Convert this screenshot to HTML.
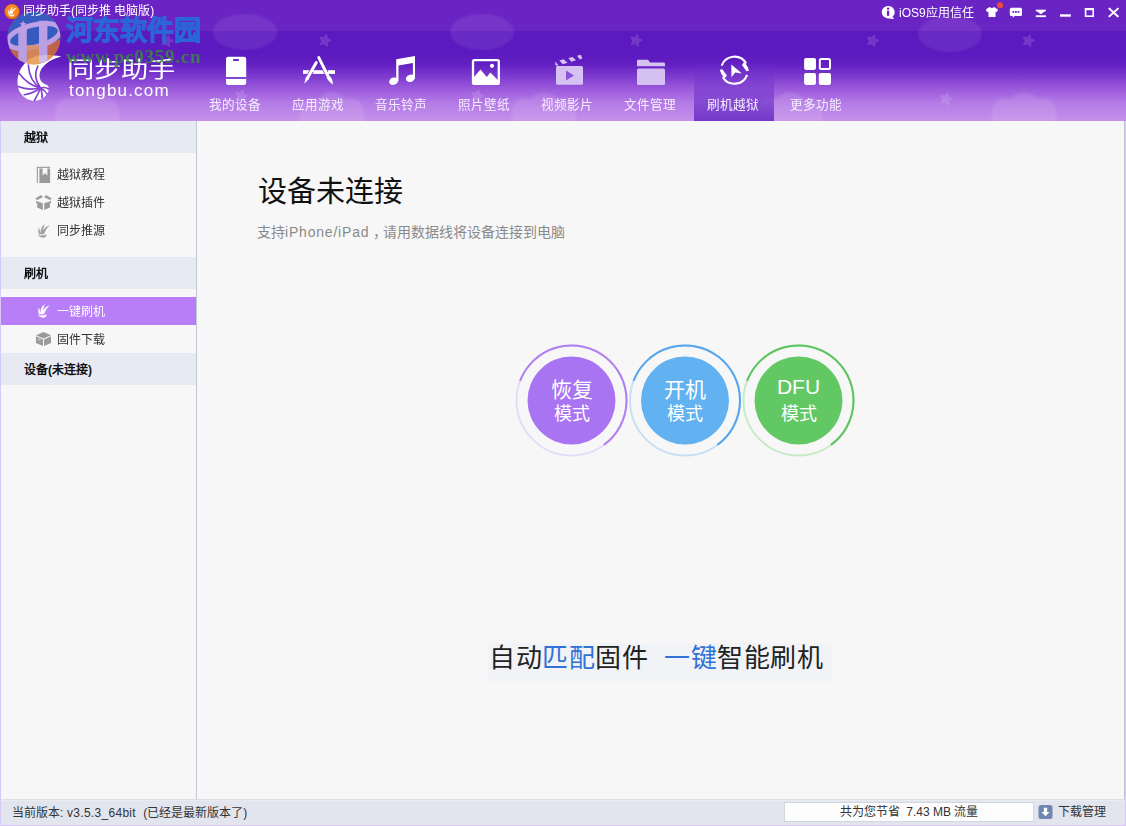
<!DOCTYPE html>
<html lang="zh-CN">
<head>
<meta charset="utf-8">
<style>
*{margin:0;padding:0;box-sizing:border-box}
html,body{width:1126px;height:826px;overflow:hidden;background:#f7f7f7}
body{position:relative;font-family:"Liberation Sans",sans-serif;}
.a{position:absolute}
#hdr{left:0;top:0;width:1126px;height:121px;
 background:linear-gradient(to bottom,#6b24c4 0px,#6b24c4 31px,#5b19bf 31px,#5b19bf 54px,#621fc2 64px,#7e3ccf 77px,#9e5cdc 90px,#b47ae6 103px,#c690ea 121px);overflow:hidden}
.ttl{left:23px;top:3px;font-size:12px;color:#fff;line-height:17px;white-space:nowrap}
.nav{top:0;width:80px;height:121px}
.nav .lb{position:absolute;left:0;width:80px;top:97px;text-align:center;font-size:12.6px;line-height:16px;color:#f4eeff;white-space:nowrap}
.sel{left:694px;top:55px;width:80px;height:66px;background:linear-gradient(to bottom,rgba(92,26,190,0.0),rgba(110,50,200,0.95))}
#side{left:0;top:121px;width:196px;height:678px;background:#f7f7f7}
#sline{left:196px;top:121px;width:1px;height:678px;background:#c2cad6}
.sh{left:0;width:196px;height:32px;background:#e7eaf3;font-size:12px;font-weight:bold;color:#111;line-height:34px;padding-left:24px;white-space:nowrap}
.si{left:0;width:196px;height:28px;font-size:12px;color:#333;line-height:31px;padding-left:57px;white-space:nowrap}
.si.on{background:#b77ef8;color:#fff}
.si svg{position:absolute;left:36px;top:6px}
#main{left:197px;top:121px;width:928px;height:678px;background:#f7f7f7}
#status{left:0;top:799px;width:1126px;height:27px;background:#e2e5ee;border-top:1px solid #dcdde6;box-shadow:inset 0 1px 0 #e9ebf2}
.bord{background:#d6c8f8}
</style>
</head>
<body>
<div id="hdr" class="a">
  <!-- decorations -->
  <svg class="a" style="left:0;top:0" width="1126" height="121" viewBox="0 0 1126 121">
    <defs>
      <g id="cl"><ellipse cx="32" cy="18" rx="32" ry="18"/></g>
      <g id="cb"><circle cx="14" cy="19" r="14"/><circle cx="32" cy="15" r="16"/><circle cx="50" cy="19" r="14"/><rect x="0" y="19" width="64" height="20"/></g>
      <filter id="bl" x="-20%" y="-20%" width="140%" height="140%"><feGaussianBlur stdDeviation="1.2"/></filter>
      <path id="st" d="M0.00 -6.30 L1.88 -2.59 L5.99 -1.95 L3.04 0.99 L3.70 5.10 L0.00 3.20 L-3.70 5.10 L-3.04 0.99 L-5.99 -1.95 L-1.88 -2.59 Z"/>
    </defs>
    <g fill="#fff" opacity="0.08" filter="url(#bl)">
      <use href="#cl" x="213" y="14"/>
      <use href="#cl" x="450" y="14"/>
      <use href="#cl" x="918" y="16"/>
    </g>
    <g fill="#fff" opacity="0.1" filter="url(#bl)">
      <use href="#cb" x="55" y="93"/>
      <use href="#cb" x="300" y="93"/>
      <use href="#cb" x="512" y="93"/>
      <use href="#cb" x="758" y="93"/>
      <use href="#cb" x="992" y="93"/>
    </g>
    <g fill="#fff" opacity="0.14" stroke="#fff" stroke-width="1" stroke-linejoin="round">
      <use href="#st" transform="translate(167 41) rotate(15)"/>
      <use href="#st" transform="translate(325 40.5) rotate(15)"/>
      <use href="#st" transform="translate(636 40.5) rotate(15)"/>
      <use href="#st" transform="translate(872.5 40.8) rotate(15)"/>
      <use href="#st" transform="translate(1028.4 40.8) rotate(15)"/>
      <use href="#st" transform="translate(241 96) rotate(15)"/>
      <use href="#st" transform="translate(477 96) rotate(15)"/>
      <use href="#st" transform="translate(946 99) rotate(15)"/>
    </g>
  </svg>
  <!-- tongbu logo -->
  <svg class="a" style="left:0;top:0" width="200" height="121" viewBox="0 0 200 121">
    <path d="M61.2 56.4 C55 55 45 54.5 39 55.5 C30 57 22 64 19 73 C16.5 80 17 88 20.5 93 C24 98.5 30 101 35 100.8 C41 100.5 46 97 48.3 91.5 C49.5 88 48.5 85.5 46 84.5 C42 83.5 39.5 80 39.5 75 C40 67 48 60 61.2 56.4 Z" fill="#fff"/>
    <g fill="none" stroke-width="1.6" stroke-linecap="round">
      <path d="M40.5 88 C36 82 34 74 37.8 66" stroke="#7c3acf"/>
      <path d="M40.5 88 C32 83 29 75 28.3 65" stroke="#7c3acf"/>
      <path d="M40.5 88 C31 86 24 80 18.8 73" stroke="#7e3dd0"/>
      <path d="M40.5 88 C32 90 24 89 18 86.6" stroke="#8240d2"/>
      <path d="M40.5 88 C35 92 29 94 24.2 94.7" stroke="#8442d3"/>
      <path d="M40.5 88 C39 92 37 96 34.4 100.5" stroke="#8442d3"/>
      <path d="M40.5 88 C42 92 42.5 95 42 98" stroke="#8442d3"/>
      <path d="M40.5 88 C44 90 46 92 47 94" stroke="#8442d3"/>
      <path d="M40.5 88 C44 87 46.5 87.5 48.5 89" stroke="#8442d3"/>
    </g>
  </svg>
  <div class="a" style="left:67px;top:52px;font-size:27.3px;line-height:36px;color:#fff;white-space:nowrap;transform:scaleY(0.8);transform-origin:0 50%;letter-spacing:0px">同步助手</div>
  <div class="a" style="left:69px;top:80px;font-size:17px;line-height:22px;color:#fff;white-space:nowrap;letter-spacing:1.2px">tongbu.com</div>
  <!-- watermark -->
  <svg class="a" style="left:0;top:0;opacity:0.88" width="70" height="70" viewBox="0 0 70 70">
    <defs><clipPath id="wc"><circle cx="34" cy="38" r="26.5"/></clipPath></defs>
    <g clip-path="url(#wc)">
      <rect x="0" y="0" width="70" height="70" fill="#d8782e" opacity="0.9"/>
      <path d="M0 0 H70 V36 Q40 48 0 46 Z" fill="#2a64c6" opacity="0.95"/>
      <ellipse cx="34" cy="36" rx="27" ry="11" transform="rotate(-14 34 36)" fill="none" stroke="#c9b2ea" stroke-width="5"/>
      <rect x="18.3" y="29" width="8.5" height="34" fill="#c9b2ea"/>
      <rect x="39" y="20.7" width="8.4" height="42" fill="#c9b2ea"/>
      <path d="M14 31 L26.8 26 L26.8 31 Z" fill="#c9b2ea"/>
      <rect x="26.8" y="45" width="12.2" height="20" fill="#e8a050" opacity="0.8"/>
    </g>
    <path d="M23 20.5 L24 23 L26.6 23.2 L24.6 24.8 L25.3 27.4 L23 26 L20.7 27.4 L21.4 24.8 L19.4 23.2 L22 23 Z" fill="#c9b2ea"/>
  </svg>
  <div class="a" style="left:66px;top:15px;font-family:'Liberation Sans',sans-serif;font-size:27px;font-weight:900;line-height:32px;color:#2a6ad8;white-space:nowrap;opacity:0.95;letter-spacing:0px;-webkit-text-stroke:1px #2a6ad8">河东软件园</div>
  <div class="a" style="left:66px;top:47px;font-family:'Liberation Serif',serif;font-size:19px;font-weight:bold;line-height:20px;color:#3a8a3c;white-space:nowrap;letter-spacing:0.75px;opacity:0.85">www.pc0359.cn</div>
  <!-- title -->
  <svg class="a" style="left:0;top:0" width="24" height="24" viewBox="0 0 24 24">
    <circle cx="12" cy="11.6" r="7.6" fill="#e8680c"/>
    <circle cx="12" cy="11.2" r="6.6" fill="#f88a22"/>
    <path d="M42 233.5 Q43.5 227 49.6 225.3 Q45.5 229 43.8 234.5 Z M40.8 233.5 Q39.8 227.5 44.8 224 Q42.8 229 42.6 233.8 Z M40.6 235.8 Q37 232 39 227.6 Q39.6 232 42.2 235 Z M38.3 232.5 Q38.6 237.7 43 237.7 Q46.6 237.5 46.6 234 Q44 236.2 40.8 234.6 Z" fill="#fff" transform="translate(12.3 11.6) scale(0.72) translate(-43.9 -230.8)"/>
  </svg>
  <div class="a ttl">同步助手(同步推 电脑版)</div>
  <!-- right title bar -->
  <svg class="a" style="left:870px;top:0" width="256" height="28" viewBox="870 0 256 28">
    <path d="M888 6 A6.2 6.2 0 1 1 888 18.4 L894.2 19 L892.6 16.8 A6.2 6.2 0 0 0 888 6 Z" fill="#fff"/>
    <circle cx="888" cy="12.2" r="6.2" fill="#fff"/>
    <rect x="887" y="10.6" width="2.2" height="5.2" fill="#6b24c4"/>
    <circle cx="888.1" cy="8.6" r="1.2" fill="#6b24c4"/>
    <!-- tshirt -->
    <path d="M989.5 7 L992 8.2 L994 7 L998 9.5 L996.8 12.3 L995.5 11.8 L995.5 17 L988.5 17 L988.5 11.8 L987.2 12.3 L985.8 9.5 Z" fill="#fff"/>
    <circle cx="1000" cy="5.2" r="3" fill="#f04a3c"/>
    <!-- chat -->
    <path d="M1011.3 7.8 H1020.5 Q1022 7.8 1022 9.3 V14.5 Q1022 16 1020.5 16 H1014.5 L1012.8 17.9 L1012.8 16 H1011.3 Q1009.8 16 1009.8 14.5 V9.3 Q1009.8 7.8 1011.3 7.8 Z" fill="#fff"/>
    <rect x="1012.4" y="11" width="1.8" height="1.8" fill="#6b24c4"/>
    <rect x="1015" y="11" width="1.8" height="1.8" fill="#6b24c4"/>
    <rect x="1017.6" y="11" width="1.8" height="1.8" fill="#6b24c4"/>
    <!-- download -->
    <rect x="1035.8" y="9.7" width="10.1" height="1.5" fill="#fff"/>
    <path d="M1036.5 11 L1045.2 11 L1040.85 14.3 Z" fill="#fff"/>
    <rect x="1035.8" y="15.3" width="10.1" height="1.8" fill="#fff"/>
    <!-- min -->
    <rect x="1060" y="14.3" width="10.8" height="2.4" fill="#fff"/>
    <!-- max -->
    <rect x="1085.6" y="8.8" width="7.6" height="7.4" fill="none" stroke="#fff" stroke-width="1.6"/>
    <rect x="1084.8" y="8" width="9.2" height="2.2" fill="#fff"/>
    <!-- close -->
    <path d="M1109.5 8.8 L1117.7 16.2 M1117.7 8.8 L1109.5 16.2" stroke="#fff" stroke-width="2" stroke-linecap="square"/>
  </svg>
  <div class="a" style="left:899px;top:4px;font-size:12px;line-height:18px;color:#fff;white-space:nowrap">iOS9应用信任</div>

  <!-- selected nav bg -->
  <div class="a sel"></div>
  <!-- nav icons -->
  <svg class="a" style="left:0;top:0" width="1126" height="121" viewBox="0 0 1126 121">
    <!-- phone -->
    <rect x="226" y="56.7" width="20.2" height="28.3" rx="2.2" fill="#fff"/>
    <rect x="232.9" y="59" width="6.3" height="2" rx="1" fill="#6a2cc6"/>
    <rect x="226" y="77.1" width="20.2" height="1.8" fill="#7233c9"/>
    <!-- app store A -->
    <rect x="303" y="70.2" width="32" height="3.7" fill="#fff"/>
    <g stroke="#7330c9" fill="none">
      <path d="M323 66 L326.3 72.7" stroke-width="4.4"/>
      <path d="M311.6 70.9 L308.5 76.3" stroke-width="4.5"/>
    </g>
    <g stroke="#fff" fill="none" stroke-linecap="round">
      <path d="M318.8 57.6 L328.2 76.5" stroke-width="2.9"/>
      <path d="M316.3 62.6 L307.4 78.2" stroke-width="3"/>
    </g>
    <path d="M326.6 77.8 L330 76.2 C331.5 78 332.8 80 332.9 84.6 C330.5 83 328.5 81 326.6 77.8 Z" fill="#fff"/>
    <path d="M305.8 77.3 L309 79.1 L304.3 83.8 Z" fill="#fff"/>
    <!-- music -->
    <g fill="#fff">
      <path d="M396.2 59.2 L415 56 L415 78.5 L412.9 78.5 L412.9 63 L398.5 65.5 L398.5 81 L396.2 81 Z"/>
      <ellipse cx="393.6" cy="81.2" rx="4.6" ry="3.6" transform="rotate(-20 393.6 81.2)"/>
      <ellipse cx="410.4" cy="78.3" rx="4.6" ry="3.6" transform="rotate(-20 410.4 78.3)"/>
    </g>
    <!-- picture -->
    <rect x="473" y="60.1" width="25.8" height="23.8" rx="1.5" fill="none" stroke="#fff" stroke-width="2.3"/>
    <circle cx="492" cy="65.8" r="2.1" fill="#fff"/>
    <path d="M474 83.5 L474 77 L480.5 69.6 L486.8 77 L490.3 72.5 L498 80.3 L498 83.5 Z" fill="#fff"/>
    <!-- clapper (light) -->
    <g fill="#d6c2f2">
      <rect x="556" y="66" width="27" height="18.7" rx="1.5"/>
      <path d="M555 61.5 L558.8 65.5 L555.6 65.5 Z"/>
      <path d="M559.3 60.4 L563.6 59.2 L567.6 62.7 L562.8 64.2 Z"/>
      <path d="M568.4 58 L572.6 57 L576 60.2 L571.3 61.7 Z"/>
      <path d="M577 55.7 L581 54.8 L582.3 58.6 L579.8 59.4 Z"/>
    </g>
    <path d="M566 70.4 L574 75.5 L566 80.6 Z" fill="#8a52d6"/>
    <!-- folder (light) -->
    <g fill="#d6c2f2">
      <path d="M637 61 Q637 59.8 638.2 59.8 L648 59.8 L650 62.6 L663.5 62.6 Q665 62.6 665 64 L665 66.3 L637 66.3 Z"/>
      <rect x="637" y="68.5" width="28" height="16.5" rx="1.5"/>
    </g>
    <!-- jailbreak circle -->
    <g fill="none" stroke="#fff" stroke-width="2.1">
      <path d="M721.7 65.6 A13.5 13.5 0 0 1 746.1 63.45"/>
      <path d="M747.1 74.8 A13.5 13.5 0 0 1 722.7 76.95"/>
    </g>
    <path d="M741.9 64.9 L743.9 62.3 A14.5 14.5 0 0 1 748.9 70.7 L746.5 71.2 Z" fill="#fff"/>
    <path d="M726.9 75.5 L724.9 78.1 A14.5 14.5 0 0 1 719.9 69.7 L722.3 69.2 Z" fill="#fff"/>
    <path d="M731.3 64.6 L741.9 73.4 L735.2 72.5 L731.5 77.3 Z" fill="#fff"/>
    <!-- grid -->
    <g fill="#fff">
      <rect x="804.1" y="58" width="11.9" height="11.9" rx="1.8"/>
      <rect x="819.8" y="59" width="10.2" height="10" rx="1.5" fill="none" stroke="#fff" stroke-width="2"/>
      <rect x="804.1" y="72.9" width="11.9" height="12" rx="1.8"/>
      <rect x="818.8" y="72.9" width="12.2" height="12" rx="1.8"/>
    </g>
  </svg>
  <div class="a nav" style="left:195px"><div class="lb">我的设备</div></div>
  <div class="a nav" style="left:278px"><div class="lb">应用游戏</div></div>
  <div class="a nav" style="left:361px"><div class="lb">音乐铃声</div></div>
  <div class="a nav" style="left:444px"><div class="lb">照片壁纸</div></div>
  <div class="a nav" style="left:527px"><div class="lb">视频影片</div></div>
  <div class="a nav" style="left:610px"><div class="lb">文件管理</div></div>
  <div class="a nav" style="left:693px"><div class="lb">刷机越狱</div></div>
  <div class="a nav" style="left:776px"><div class="lb">更多功能</div></div>
</div>

<div id="side" class="a">
  <div class="a sh" style="top:0">越狱</div>
  <svg class="a" style="left:0;top:0;z-index:2" width="60" height="240" viewBox="0 121 60 240">
    <!-- book -->
    <rect x="36.8" y="166.8" width="13.3" height="1.1" fill="#9a9a9a"/>
    <rect x="36.8" y="166.8" width="1.1" height="16.2" fill="#9a9a9a"/>
    <path d="M39.4 168.6 H50.1 V183 H39.4 Z M42.6 168.6 V175.5 L45 173.3 L47.4 175.5 V168.6 Z" fill="#9a9a9a" fill-rule="evenodd"/>
    <!-- open box -->
    <path d="M35.2 198.4 L41.2 195.1 L42.9 197.2 L37.2 200.1 Z M51.9 198.4 L45.9 195.1 L44.2 197.2 L49.9 200.1 Z" fill="#9a9a9a"/>
    <path d="M36.1 200.9 L42.8 203.3 L42.8 209.9 L37.2 207.6 L37.2 203.5 L36.1 203.1 Z M51 200.9 L44.3 203.3 L44.3 209.9 L49.9 207.6 L49.9 203.5 L51 203.1 Z" fill="#9a9a9a"/>
    <!-- swirl gray -->
    <path d="M42 233.5 Q43.5 227 49.6 225.3 Q45.5 229 43.8 234.5 Z M40.8 233.5 Q39.8 227.5 44.8 224 Q42.8 229 42.6 233.8 Z M40.6 235.8 Q37 232 39 227.6 Q39.6 232 42.2 235 Z M38.3 232.5 Q38.6 237.7 43 237.7 Q46.6 237.5 46.6 234 Q44 236.2 40.8 234.6 Z" fill="#a0a0a0"/>
    <!-- cube -->
    <path d="M36 335.3 L43.5 332 L51 335.3 L43.5 338.6 Z" fill="#9a9a9a"/>
    <path d="M36 336.3 L43 339.4 L43 346.1 L36 343 Z" fill="#9a9a9a"/>
    <path d="M51 336.3 L44 339.4 L44 346.1 L51 343 Z" fill="#9a9a9a"/>
    <path d="M38 339 L40.5 340.1" stroke="#f6f6f6" stroke-width="0.8"/>
  </svg>
  <div class="a si" style="top:39px">越狱教程</div>
  <div class="a si" style="top:67px">越狱插件</div>
  <div class="a si" style="top:95px">同步推源</div>
  <div class="a sh" style="top:136px">刷机</div>
  <div class="a si on" style="top:176px">一键刷机<svg width="16" height="18" viewBox="36 222 16 18" style="left:36px;top:5.1px"><path d="M42 233.5 Q43.5 227 49.6 225.3 Q45.5 229 43.8 234.5 Z M40.8 233.5 Q39.8 227.5 44.8 224 Q42.8 229 42.6 233.8 Z M40.6 235.8 Q37 232 39 227.6 Q39.6 232 42.2 235 Z M38.3 232.5 Q38.6 237.7 43 237.7 Q46.6 237.5 46.6 234 Q44 236.2 40.8 234.6 Z" fill="#fff"/></svg></div>
  <div class="a si" style="top:204px">固件下载</div>
  <div class="a sh" style="top:232px">设备(未连接)</div>
</div>
<div id="sline" class="a"></div>

<div id="main" class="a">
  <div class="a" style="left:61px;top:52px;font-size:29px;line-height:38px;color:#111;white-space:nowrap">设备未连接</div>
  <div class="a" style="left:60px;top:101px;font-size:14px;line-height:20px;color:#8a8a8a;white-space:nowrap">支持<span style="letter-spacing:0.8px">iPhone/iPad</span><span style="display:inline-block;width:14px;padding-left:4px;overflow:visible">，</span>请用数据线将设备连接到电脑</div>
  <svg class="a" style="left:300px;top:214px" width="360" height="130" viewBox="0 0 360 130">
    <g transform="translate(74.5,65.5)">
      <circle r="55" fill="none" stroke="#e6dcf8" stroke-width="2"/>
      <path d="M -51.35 -19.7 A 55 55 0 1 1 32.4 44.4" fill="none" stroke="#b27ff0" stroke-width="2"/>
      <circle r="44" fill="#a974f2"/>
      <text x="0" y="-4" text-anchor="middle" font-size="21" fill="#fff">恢复</text>
      <text x="0" y="19" text-anchor="middle" font-size="18" fill="#fff">模式</text>
    </g>
    <g transform="translate(188,65.5)">
      <circle r="55" fill="none" stroke="#c8e0f6" stroke-width="2"/>
      <path d="M -51.35 -19.7 A 55 55 0 1 1 32.4 44.4" fill="none" stroke="#56a6ec" stroke-width="2"/>
      <circle r="44" fill="#62b1f0"/>
      <text x="0" y="-4" text-anchor="middle" font-size="21" fill="#fff">开机</text>
      <text x="0" y="19" text-anchor="middle" font-size="18" fill="#fff">模式</text>
    </g>
    <g transform="translate(301.5,65.5)">
      <circle r="55" fill="none" stroke="#c8eac8" stroke-width="2"/>
      <path d="M -51.35 -19.7 A 55 55 0 1 1 32.4 44.4" fill="none" stroke="#5cc45e" stroke-width="2"/>
      <circle r="44" fill="#62c864"/>
      <text x="0" y="-6.5" text-anchor="middle" font-size="21" fill="#fff">DFU</text>
      <text x="0" y="19" text-anchor="middle" font-size="18" fill="#fff">模式</text>
    </g>
  </svg>
  <div class="a" style="left:291px;top:522px;width:344px;height:38px;background:#f1f3f7"></div>
  <div class="a" style="left:292px;top:519px;font-size:26px;line-height:36px;color:#222;white-space:nowrap;letter-spacing:0.5px">自动<span style="color:#3172d6">匹配</span>固件<span style="display:inline-block;width:16px"></span><span style="color:#3172d6">一键</span>智能刷机</div>
</div>

<div id="status" class="a">
  <div class="a" style="left:12px;top:4px;font-size:12px;line-height:18px;color:#333;white-space:nowrap">当前版本:<span style="letter-spacing:0.3px"> v3.5.3_64bit&nbsp;&nbsp;</span>(已经是最新版本了)</div>
  <div class="a" style="left:784px;top:2px;width:250px;height:20px;background:#fdfdfd;border:1px solid #d2d6de"></div>
  <div class="a" style="left:784px;top:3px;width:250px;text-align:center;font-size:12px;line-height:18px;color:#333;white-space:nowrap">共为您节省&nbsp;&nbsp;7.43 MB 流量</div>
  <svg class="a" style="left:1038px;top:5px" width="15" height="15" viewBox="0 0 15 15">
    <rect x="0.5" y="0" width="14" height="14" rx="2.5" fill="#6f86b0"/>
    <path d="M5.8 2.8 H9.2 V7 H11.5 L7.5 11.3 L3.5 7 H5.8 Z" fill="#fff"/>
  </svg>
  <div class="a" style="left:1058px;top:3px;font-size:12px;line-height:18px;color:#333;white-space:nowrap">下载管理</div>
</div>
<div class="a bord" style="left:0;top:121px;width:1px;height:705px"></div>
<div class="a bord" style="left:1125px;top:121px;width:1px;height:705px"></div>
<div class="a" style="left:1124px;top:121px;width:1px;height:678px;background:#bcc4d0"></div>
<div class="a bord" style="left:0;top:825px;width:1126px;height:1px"></div>
</body>
</html>
